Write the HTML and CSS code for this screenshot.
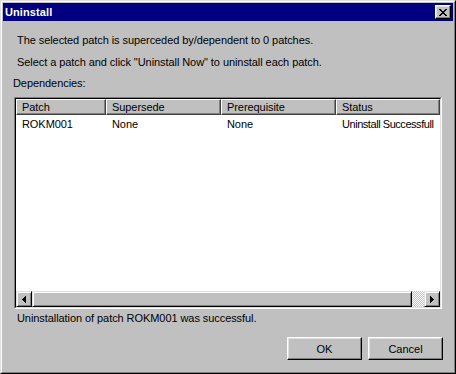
FILE: index.html
```html
<!DOCTYPE html>
<html>
<head>
<meta charset="utf-8">
<link rel="stylesheet" href="styles.css">
</head>
<body>
<div class="window">
  <div class="frame">
    <div class="titlebar">
      <span class="title">Uninstall</span>
      <button class="close" type="button" aria-label="Close">
        <svg width="8" height="7" viewBox="0 0 8 7" shape-rendering="crispEdges">
          <path d="M0 0h2v1h-2zM6 0h2v1h-2zM1 1h2v1h-2zM5 1h2v1h-2zM2 2h4v1h-4zM3 3h2v1h-2zM2 4h4v1h-4zM1 5h2v1h-2zM5 5h2v1h-2zM0 6h2v1h-2zM6 6h2v1h-2z" fill="#000"/>
        </svg>
      </button>
    </div>
    <div class="content">
      <p class="msg msg1">The selected patch is superceded by/dependent to 0 patches.</p>
      <p class="msg msg2">Select a patch and click "Uninstall Now" to uninstall each patch.</p>
      <p class="label">Dependencies:</p>
      <div class="listview">
        <div class="lv-inner">
          <div class="lv-body">
            <div class="header">
              <div class="hcell c1">Patch</div>
              <div class="hcell c2">Supersede</div>
              <div class="hcell c3">Prerequisite</div>
              <div class="hcell c4">Status</div>
            </div>
            <div class="row">
              <div class="cell c1">ROKM001</div>
              <div class="cell c2">None</div>
              <div class="cell c3">None</div>
              <div class="cell c4 tight">Uninstall Successfull</div>
            </div>
          </div>
          <div class="hscroll">
            <div class="sbtn">
              <svg width="4" height="7" viewBox="0 0 4 7" shape-rendering="crispEdges"><path d="M3 0h1v7h-1zM2 1h1v5h-1zM1 2h1v3h-1zM0 3h1v1h-1z" fill="#000"/></svg>
            </div>
            <div class="thumb"></div>
            <div class="track"></div>
            <div class="sbtn">
              <svg width="4" height="7" viewBox="0 0 4 7" shape-rendering="crispEdges"><path d="M0 0h1v7h-1zM1 1h1v5h-1zM2 2h1v3h-1zM3 3h1v1h-1z" fill="#000"/></svg>
            </div>
          </div>
        </div>
      </div>
      <p class="msg status">Uninstallation of patch ROKM001 was successful.</p>
      <div class="buttons">
        <button class="btn" type="button">OK</button>
        <button class="btn" type="button">Cancel</button>
      </div>
    </div>
  </div>
</div>
</body>
</html>
```

FILE: styles.css
```css
* { box-sizing: border-box; }
html, body { margin: 0; padding: 0; }
body {
  background: #c0c0c0;
  font-family: "Liberation Sans", Arial, sans-serif;
  font-size: 11px;
  line-height: 13px;
  letter-spacing: -0.07px;
  color: #000;
}
.window {
  width: 456px;
  height: 374px;
  border: 1px solid;
  border-color: #dfdfdf #000 #000 #dfdfdf;
  background: #c0c0c0;
}
.frame {
  height: 100%;
  border: 1px solid;
  border-color: #fff #808080 #808080 #fff;
  padding: 1px;
}
.titlebar {
  height: 18px;
  background: #000080;
  display: flex;
  align-items: center;
  justify-content: space-between;
  padding: 0 2px 0 2px;
}
.title {
  color: #fff;
  font-weight: bold;
  font-size: 11px;
  letter-spacing: 0.1px;
}
.close {
  width: 16px;
  height: 14px;
  padding: 0;
  margin: 0;
  background: #c0c0c0;
  border: 1px solid;
  border-color: #fff #000 #000 #fff;
  box-shadow: inset -1px -1px #808080, inset 1px 1px #dfdfdf;
  display: flex;
  align-items: center;
  justify-content: center;
}
.close svg { display: block; margin-left: -1px; }
.content { display: flex; flex-direction: column; }
.msg { margin: 0; padding-left: 14px; }
.msg1 { margin-top: 13px; }
.msg2 { margin-top: 9px; }
.label { margin: 8px 0 0 0; padding-left: 10px; }
.listview {
  margin: 7px 11px 0 11px;
  height: 212px;
  border: 1px solid;
  border-color: #808080 #fff #fff #808080;
}
.lv-inner {
  height: 100%;
  border: 1px solid;
  border-color: #000 #dfdfdf #dfdfdf #000;
  background: #fff;
  display: flex;
  flex-direction: column;
}
.lv-body { flex: 1; overflow: hidden; }
.header, .row { display: flex; white-space: nowrap; }
.header { height: 16px; }
.hcell {
  flex: none;
  background: #c0c0c0;
  border: 1px solid;
  border-color: #fff #404040 #404040 #fff;
  box-shadow: inset -1px -1px #808080;
  padding: 1px 0 0 5px;
  overflow: hidden;
}
.cell { flex: none; padding: 3px 0 0 6px; overflow: hidden; }
.tight { letter-spacing: -0.45px; }
.c1 { width: 90px; }
.c2 { width: 115px; }
.c3 { width: 115px; }
.c4 { width: 104px; }
.hscroll { height: 16px; display: flex; flex: none; }
.sbtn, .thumb {
  background: #c0c0c0;
  border: 1px solid;
  border-color: #dfdfdf #000 #000 #dfdfdf;
  box-shadow: inset 1px 1px #fff, inset -1px -1px #808080;
}
.sbtn {
  width: 16px;
  flex: none;
  display: flex;
  align-items: center;
  justify-content: center;
}
.sbtn svg { display: block; }
.thumb { width: 380px; flex: none; }
.track {
  flex: 1;
  background: repeating-conic-gradient(#fff 0 25%, #c0c0c0 0 50%) 0 0 / 2px 2px;
}
.status { margin-top: 3px; }
.buttons {
  margin-top: 12px;
  display: flex;
  justify-content: flex-end;
  gap: 6px;
  padding-right: 10px;
}
.btn {
  width: 75px;
  height: 23px;
  margin: 0;
  padding: 0;
  background: #c0c0c0;
  border: 1px solid;
  border-color: #fff #000 #000 #fff;
  box-shadow: inset -1px -1px #808080, inset 1px 1px #dfdfdf;
  font-family: "Liberation Sans", Arial, sans-serif;
  font-size: 11px;
  color: #000;
}
```
